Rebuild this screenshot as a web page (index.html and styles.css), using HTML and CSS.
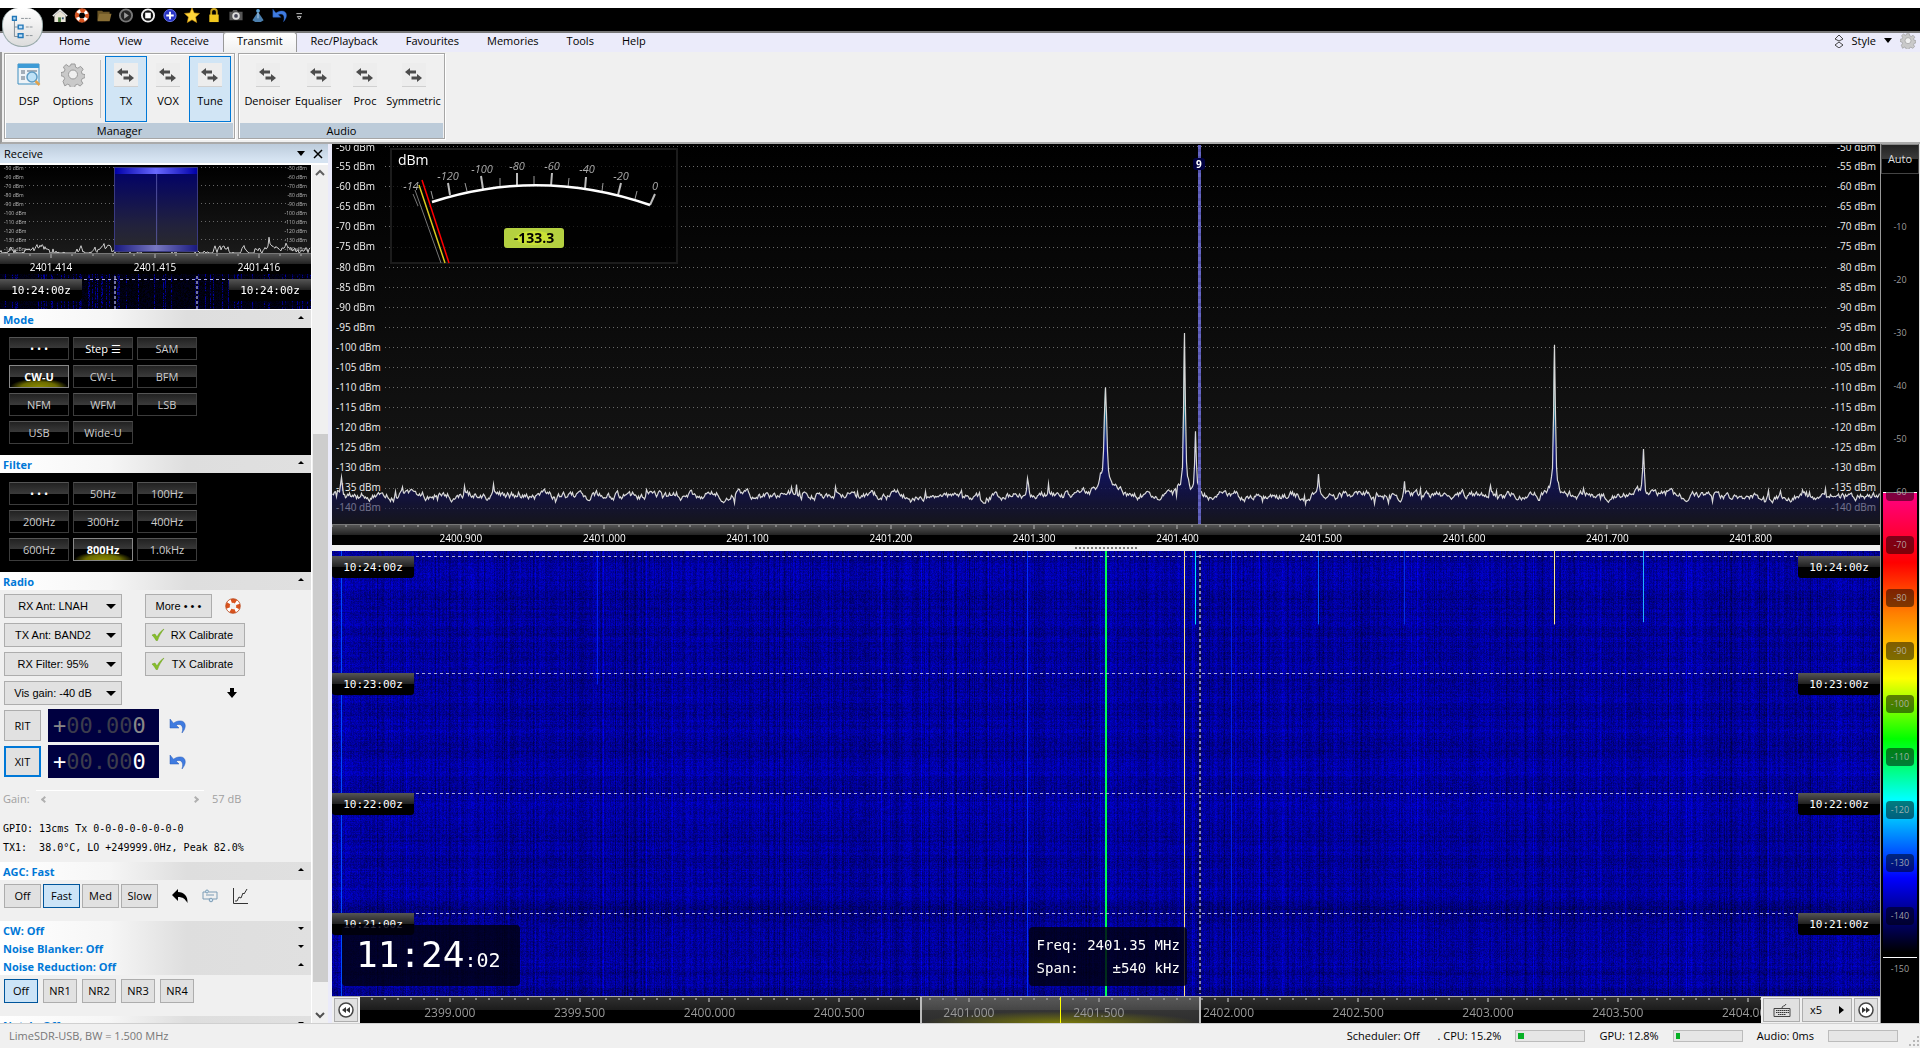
FILE: index.html
```html
<!DOCTYPE html>
<html lang="en">
<head>
<meta charset="utf-8">
<title>SDR Console</title>
<link rel="stylesheet" href="styles.css">
</head>
<body>
<svg width="0" height="0" class="defs" aria-hidden="true">
  <defs>
    <symbol id="i-swap" viewBox="0 0 24 24"><rect width="24" height="24" fill="#ededed"/><path d="M0 23.500h24" stroke="#d0d0d0"/><path d="M3 9l5-4v2.500h6v3H8V13zM20 15l-5-4v2.500H9.500v3H15V19z" fill="#4c4c4c"/></symbol>
    <symbol id="i-gear" viewBox="0 0 24 24"><path d="M10 1h4l.6 3.200 2.200 1L19.600 3.400l2.600 2.800-1.800 2.600.8 2.200 2.800.6v3l-2.800 1-.9 2.200 1.600 2.600-2.800 2.600-2.700-1.700-2.200.9-.8 3h-4l-.7-3.100-2.200-.9-2.700 1.700L2 18.400l1.700-2.700-1-2.200L0 12.700V9.600l3-.7 1-2.100L2.400 4l2.800-2.500L7.800 3.400 9.600 2.600z" fill="#c9c9c9" stroke="#9a9a9a"/><circle cx="12" cy="11.500" r="4.500" fill="#f0f0f0" stroke="#9a9a9a"/></symbol>
    <symbol id="i-dsp" viewBox="0 0 24 24"><path d="M1 1h21v20H1z" fill="#eef3f7" stroke="#3f8fc0"/><path d="M1 1h21v4H1z" fill="#3d9bd6"/><path d="M4 8h4M4 10h4M4 14h4M4 16h4M10 8h10" stroke="#8b98a5" stroke-width="1.500"/><circle cx="15" cy="14" r="5" fill="#bfe2f7" stroke="#5e9cc4" stroke-width="1.500"/><path d="M18.500 18l4 4" stroke="#e3a24a" stroke-width="2.500"/></symbol>
    <symbol id="i-ring" viewBox="0 0 16 16"><circle cx="8" cy="8" r="5.200" fill="none" stroke="#fff" stroke-width="4"/><circle cx="8" cy="8" r="5.200" fill="none" stroke="#d9531e" stroke-width="4" stroke-dasharray="5 3.170" stroke-dashoffset="2.500"/><circle cx="8" cy="8" r="7.300" fill="none" stroke="#b8481c" stroke-width=".8"/></symbol>
    <symbol id="i-undo" viewBox="0 0 18 16"><path d="M1 1v9h9L7 7c5-2 8 1 6 8 6-7 3-13-3-12-2 .2-4 1-5.500 2.200z" fill="#3f7be0" stroke="#2a5cb8" stroke-width=".5"/></symbol>
    <symbol id="i-tick" viewBox="0 0 14 14"><path d="M1 7l3-1 2 3c2-4 4-6 7-8-3 4-5 7-6.500 11.500H5C4 10.500 3 9 1 7z" fill="#86bf2a" stroke="#6a9f1a" stroke-width=".5"/></symbol>
  </defs>
</svg>

<header class="shell-top">
  <div class="titlebar">
    <div class="quick">
      <svg viewBox="0 0 16 16"><path d="M2 8v7h12V8L8 3z" fill="#e9e4d8"/><path d="M0 8l8-7 8 7-1 1-7-6-7 6z" fill="#f5f5f5" stroke="#aaa" stroke-width=".4"/><path d="M6 10h3v5H6z" fill="#4a7a3a"/><path d="M10 10h2v2h-2z" fill="#357"/></svg>
      <svg><use href="#i-ring"/></svg>
      <svg viewBox="0 0 16 16"><path d="M1 3h5l1 1h7v9H1z" fill="#6b5526"/><path d="M3 6h13l-2 8H1z" fill="#8a6f35"/></svg>
      <svg viewBox="0 0 16 16"><circle cx="8" cy="8" r="6.500" fill="#222" stroke="#777" stroke-width="2"/><path d="M6 4.500l5 3.500-5 3.500z" fill="#999"/></svg>
      <svg viewBox="0 0 16 16"><circle cx="8" cy="8" r="6.500" fill="#111" stroke="#eee" stroke-width="2"/><path d="M5 5h6v6H5z" fill="#fff"/></svg>
      <svg viewBox="0 0 16 16"><circle cx="8" cy="8" r="6.500" fill="#2733c4" stroke="#6a78f0"/><path d="M8 4v8M4 8h8" stroke="#fff" stroke-width="2"/></svg>
      <svg viewBox="0 0 16 16"><path d="M8 0l2.300 5.200 5.700.6-4.200 3.900 1.200 5.800L8 12.600l-5 2.900 1.200-5.800L0 5.800l5.700-.6z" fill="#ffd63a" stroke="#d79a10" stroke-width=".6"/></svg>
      <svg viewBox="0 0 16 16"><path d="M5 8V4a3 3 0 0 1 6 0v4" fill="none" stroke="#c9a21a" stroke-width="2"/><path d="M3 7h10v8H3z" fill="#f2c81e"/></svg>
      <svg viewBox="0 0 16 16"><path d="M1 4h3l1-2h4l1 2h5v9H1z" fill="#555"/><circle cx="8" cy="8.500" r="4" fill="#ddd"/><circle cx="8" cy="8.500" r="2" fill="#445"/></svg>
      <svg viewBox="0 0 16 16"><circle cx="8" cy="3" r="2" fill="#5fa3d8"/><path d="M8 4l6 9-3 2H5l-3-2z" fill="#4b7fae"/><path d="M8 5v6" stroke="#bcd9f0"/></svg>
      <svg viewBox="0 0 18 16"><use href="#i-undo"/></svg>
      <svg viewBox="0 0 16 16"><path d="M2 6h6M3 9h4l-2 3z" stroke="#ccc" fill="none"/></svg>
    </div>
  </div>
  <button class="orb" aria-label="Application menu">
    <svg viewBox="0 0 42 38"><path d="M12 12v17h5M12 19h5" fill="none" stroke="#7a8a96"/><path d="M19 10h10M24 19h7M24 28h7" stroke="#8b9298" stroke-dasharray="3 1"/><path d="M10 8h4v4h-4zM16 17h5v4h-5zM16 26h5v4h-5z" fill="#bfe0f8" stroke="#2277b8" stroke-width="1.500"/></svg>
  </button>
  <nav class="tabs">
    <button>Home</button><button>View</button><button>Receive</button><button class="on">Transmit</button><button>Rec/Playback</button><button>Favourites</button><button>Memories</button><button>Tools</button><button>Help</button>
    <div class="style-menu">
      <svg width="10" height="14" viewBox="0 0 10 14"><path d="M1 5l4-4 4 4-4 2zM1 11l4-3 4 3-4 3z" fill="none" stroke="#444"/></svg>
      <button>Style <i class="down"></i></button>
      <svg width="16" height="16"><use href="#i-gear"/></svg>
    </div>
  </nav>
  <div class="ribbon">
    <section class="group">
      <div class="tools">
        <button class="w42"><svg><use href="#i-dsp"/></svg>DSP</button>
        <button class="w46"><svg><use href="#i-gear"/></svg>Options</button>
        <i class="rule"></i>
        <button class="w42 on"><svg><use href="#i-swap"/></svg>TX</button>
        <button class="w42"><svg><use href="#i-swap"/></svg>VOX</button>
        <button class="w42 on"><svg><use href="#i-swap"/></svg>Tune</button>
      </div>
      <h2>Manager</h2>
    </section>
    <section class="group">
      <div class="tools">
        <button class="w52"><svg><use href="#i-swap"/></svg>Denoiser</button>
        <button class="w52"><svg><use href="#i-swap"/></svg>Equaliser</button>
        <button class="w42"><svg><use href="#i-swap"/></svg>Proc</button>
        <button class="w54"><svg><use href="#i-swap"/></svg>Symmetric</button>
      </div>
      <h2>Audio</h2>
    </section>
  </div>
</header>

<main>
  <aside class="dock">
    <h1>Receive <span><i class="down"></i><svg width="10" height="10" viewBox="0 0 10 10"><path d="M1 1l8 8M9 1L1 9" stroke="#000" stroke-width="1.500"/></svg></span></h1>
    <div class="dock-body">
      <div class="panels">
        <div class="mini">
          <div class="mini-plot" id="mini-plot"><canvas></canvas><div class="passband"></div></div>
          <div class="axis mini-axis" id="mini-axis"><canvas></canvas></div>
          <div class="mini-fall"><canvas id="mini-fall"></canvas><i class="dash"></i><b class="stamp">10:24:00z</b><b class="stamp right">10:24:00z</b></div>
        </div>

        <h3>Mode<i class="up"></i></h3>
        <div class="keys">
          <button class="lit">• • •</button><button class="lit">Step ☰</button><button>SAM</button>
          <button class="on">CW-U</button><button>CW-L</button><button>BFM</button>
          <button>NFM</button><button>WFM</button><button>LSB</button>
          <button>USB</button><button>Wide-U</button>
        </div>
        <h3>Filter<i class="up"></i></h3>
        <div class="keys">
          <button class="lit">• • •</button><button>50Hz</button><button>100Hz</button>
          <button>200Hz</button><button>300Hz</button><button>400Hz</button>
          <button>600Hz</button><button class="on">800Hz</button><button>1.0kHz</button>
        </div>

        <h3>Radio<i class="up"></i></h3>
        <div class="radio">
          <div class="combo"><select aria-label="RX antenna"><option>RX Ant: LNAH</option></select></div>
          <div class="side"><button class="btn more">More • • •</button><svg width="16" height="16"><use href="#i-ring"/></svg></div>
          <div class="combo"><select aria-label="TX antenna"><option>TX Ant: BAND2</option></select></div>
          <div class="side"><button class="btn cal"><svg width="14" height="14"><use href="#i-tick"/></svg><span>RX Calibrate</span></button></div>
          <div class="combo"><select aria-label="RX filter"><option>RX Filter: 95%</option></select></div>
          <div class="side"><button class="btn cal"><svg width="14" height="14"><use href="#i-tick"/></svg><span>TX Calibrate</span></button></div>
          <div class="combo"><select aria-label="Visual gain"><option>Vis gain: -40 dB</option></select></div>
          <div class="side arrow"><svg width="10" height="10" viewBox="0 0 10 10"><path d="M3 0h4v4h3L5 10 0 4h3z"/></svg></div>
        </div>
        <div class="offset">
          <button class="btn">RIT</button><output class="dim"><b>+</b>00.00<b>0</b></output><svg width="18" height="16"><use href="#i-undo"/></svg>
        </div>
        <div class="offset">
          <button class="btn focus">XIT</button><output><b>+</b>00.00<b>0</b></output><svg width="18" height="16"><use href="#i-undo"/></svg>
        </div>
        <div class="gain">
          <label for="gain">Gain:</label>
          <span class="track"><i></i><input id="gain" type="range" disabled><i class="r"></i></span>
          <span>57 dB</span>
        </div>
        <pre class="info">GPIO: 13cms Tx 0-0-0-0-0-0-0-0
TX1:  38.0°C, LO +249999.0Hz, Peak 82.0%</pre>

        <h3>AGC: Fast<i class="up"></i></h3>
        <div class="row agc">
          <button class="btn">Off</button><button class="btn on">Fast</button><button class="btn">Med</button><button class="btn">Slow</button>
          <svg width="16" height="14" viewBox="0 0 16 14"><path d="M0 6l6-6v3c6 0 10 4 9.500 11C13 10 11 8 6 8v4z"/></svg>
          <svg width="16" height="14" viewBox="0 0 16 14"><path d="M1 3h3M7 3h8v7h-4M8 10H1V3M4 6h8" fill="none" stroke="#7c9cb5"/><circle cx="5" cy="2.500" r="1.500" fill="#cfe3f2" stroke="#7c9cb5"/><circle cx="9" cy="11" r="1.800" fill="#cfe3f2" stroke="#7c9cb5"/></svg>
          <svg width="16" height="16" viewBox="0 0 16 16"><path d="M1.500 0v15.500H16M3 13h2l2-4 2 1 2-5 1 1 3-5" fill="none" stroke="#333"/></svg>
        </div>
        <h3>CW: Off<i class="dn"></i></h3>
        <h3>Noise Blanker: Off<i class="dn"></i></h3>
        <h3>Noise Reduction: Off<i class="up"></i></h3>
        <div class="row nr">
          <button class="btn on">Off</button><button class="btn">NR1</button><button class="btn">NR2</button><button class="btn">NR3</button><button class="btn">NR4</button>
        </div>
        <h3>Notch: Off<i class="dn"></i></h3>
      </div>
      <div class="scroll">
        <svg width="10" height="8" viewBox="0 0 10 8"><path d="M1 6l4-4 4 4" fill="none" stroke="#606060" stroke-width="2"/></svg>
        <i></i>
        <svg width="10" height="8" viewBox="0 0 10 8"><path d="M1 2l4 4 4-4" fill="none" stroke="#505050" stroke-width="2"/></svg>
      </div>
    </div>
  </aside>

  <section class="display">
    <div class="plot" id="plot">
      <canvas></canvas>
      <i class="marker"></i><b class="marker-no">9</b>
      <svg class="meter" viewBox="0 0 288 116">
        <rect x="1" y="1" width="286" height="114" fill="#000" fill-opacity=".7" stroke="#1c1c1c" stroke-width="2"/>
        <text x="8" y="17" class="unit">dBm</text>
        <g class="nums">
          <text x="21" y="42">-14</text><text x="58" y="32">-120</text><text x="92" y="25">-100</text><text x="127" y="22">-80</text><text x="162" y="22">-60</text><text x="197" y="25">-40</text><text x="231" y="32">-20</text><text x="265" y="42">0</text>
        </g>
        <path d="M60 47l-2-12M93 41l-2-13M127 38V25M161 38l1-13M195 41l1-12M228 47l3-12M260 57l5-11" stroke="#bbb" stroke-width="2"/>
        <path d="M43 51l-2-8M77 43l-2-8M110 39v-9M144 37v-9M178 39l1-9M212 43l1-8M245 51l2-8" stroke="#999"/>
        <path d="M42 54Q150 19 260 57" fill="none" stroke="#fff" stroke-width="2.500"/>
        <path d="M25 42l26 73M23 46l5 12" stroke="#777"/>
        <path d="M29 37l26 78" stroke="#d8c820" stroke-width="1.500"/>
        <path d="M32 32l27 83" stroke="#f00" stroke-width="1.500"/>
        <rect x="114" y="80" width="60" height="20" rx="3" fill="#b4d040"/><ellipse cx="144" cy="90" rx="18" ry="7" fill="#d3ea30" opacity=".7"/>
        <text x="144" y="95" class="val">-133.3</text>
      </svg>
    </div>
    <div class="axis" id="axis"><canvas></canvas></div>
    <div class="splitter"><i></i></div>
    <div class="fall" id="fall">
      <canvas></canvas>
      <i class="cursor"></i>
      <div class="clock">11:24<small>:02</small></div>
      <pre class="span">Freq: 2401.35 MHz
Span:    ±540 kHz</pre>
    </div>
    <div class="bandbar">
      <button class="btn" aria-label="Back"><svg width="16" height="16" viewBox="0 0 16 16"><circle cx="8" cy="8" r="7" fill="#fff" stroke="#444" stroke-width="1.500"/><path d="M8 5v6L4 8zM12 5v6L8 8z" fill="#333"/></svg></button>
      <div class="band" id="band"><canvas></canvas><i class="window"></i></div>
      <button class="btn kb" aria-label="Keyboard"><svg width="18" height="14" viewBox="0 0 18 14"><path d="M1 5.500h16v8H1z" fill="#ddd" stroke="#444"/><path d="M3 7.500h13M3 9.500h13M5 11.500h8" stroke="#333" stroke-dasharray="1.500 .5"/><path d="M9 5c0-3 3-1 4-4" fill="none" stroke="#444"/></svg></button>
      <button class="btn x5">x5 <i></i></button>
      <button class="btn" aria-label="Forward"><svg width="16" height="16" viewBox="0 0 16 16"><circle cx="8" cy="8" r="7" fill="#fff" stroke="#444" stroke-width="1.500"/><path d="M8 5v6l4-3zM4 5v6l4-3z" fill="#333"/></svg></button>
    </div>
  </section>

  <aside class="levels">
    <button>Auto</button>
    <div class="scale" id="scale"><i class="spectrum"></i></div>
  </aside>
</main>

<footer>
  <span class="dev">LimeSDR-USB, BW = 1.500 MHz</span>
  <span class="sched">Scheduler: Off</span>
  <label for="cpu" class="cpu">. CPU: 15.2%</label><progress id="cpu" max="100" value="8"></progress>
  <label for="gpu">GPU: 12.8%</label><progress id="gpu" max="100" value="6"></progress>
  <label for="aud">Audio: 0ms</label><progress id="aud" max="100" value="0"></progress>
  <svg class="grip" width="10" height="10" viewBox="0 0 10 10"><path d="M8 0h2v2H8zM4 4h2v2H4zM8 4h2v2H8zM0 8h2v2H0zM4 8h2v2H4zM8 8h2v2H8z" fill="#b8b8b8"/></svg>
</footer>
<script src="app.js"></script>
</body>
</html>
```

FILE: styles.css
```css
* { box-sizing: border-box; }
:root { --ui: "Segoe UI", "Open Sans", "Noto Sans", sans-serif; --mono: Consolas, "DejaVu Sans Mono", monospace; }
body { margin: 0; height: 100vh; overflow: hidden; display: flex; flex-direction: column; background: #f0f0f0; font: 11px/16px var(--ui); color: #000; }
button, select, input { font: inherit; color: inherit; margin: 0; }
h1, h2, h3, pre { margin: 0; font-weight: 400; font-size: inherit; }
canvas { display: block; position: absolute; inset: 0; width: 100%; height: 100%; }
.defs { position: absolute; }
.down { display: inline-block; border: 4px solid transparent; border-top: 5px solid #000; border-bottom: 0; }

/* ribbon */
.shell-top { position: relative; background: #fff; padding-top: 8px; }
.titlebar { height: 23px; background: #000; }
.quick { display: flex; gap: 6px; padding-left: 52px; }
.quick svg { width: 16px; height: 15px; }
.orb { position: absolute; left: 2px; top: 8px; width: 41px; height: 39px; padding: 0; border: 1px solid #9aa; border-top: 0; border-radius: 16px 16px 20px 20px; background: linear-gradient(#fff, #dcdcdc); }
.orb svg { width: 40px; height: 38px; display: block; }
.tabs { display: flex; align-items: stretch; height: 21px; padding-left: 45px; background: #ebebfa; border-top: 2px solid #777; }
.tabs > button { padding: 0 14px; border: 0; background: none; line-height: 14px; padding-bottom: 4px; }
.tabs > .on { background: linear-gradient(#fff, #f0f0f0); border: 1px solid #999; border-bottom: 0; border-radius: 3px 3px 0 0; margin-top: -1px; padding: 0 13px 4px; }
.style-menu { margin-left: auto; display: flex; align-items: center; gap: 8px; padding: 0 4px 4px 0; }
.style-menu button { border: 0; background: none; padding: 0; display: flex; align-items: center; gap: 8px; }
.ribbon { display: flex; gap: 3px; padding: 1px 4px 0 2px; height: 92px; border-bottom: 2px solid #aaa; border-left: 2px solid #999; background: #f0f0f0; }
.group { height: 86px; border: 1px solid #a6a6a6; box-shadow: inset 1px 1px #fff, 1px 1px #fff; display: flex; flex-direction: column; }
.tools { flex: 1; display: flex; padding: 2px 3px 1px; }
.tools button { display: flex; flex-direction: column; align-items: center; gap: 6px; padding: 6px 0 0; border: 1px solid transparent; background: none; }
.tools button svg { width: 24px; height: 24px; }
.tools .on { background: #d1e5f5; border-color: #0078d7; }
.tools .rule { width: 1px; background: #c0c0c0; margin: 4px 4px; }
.w42 { width: 42px; } .w46 { width: 46px; } .w52 { width: 51px; } .w54 { width: 55px; }
.group h2 { background: #bccbd9; text-align: center; line-height: 15px; margin: 0 1px; }

main { flex: 1; min-height: 0; display: flex; background: #ebebfa; }

/* receive dock */
.dock { width: 328px; margin-right: 4px; display: flex; flex-direction: column; background: #f0f0f0; flex: none; }
.dock h1 { height: 21px; line-height: 20px; padding: 0 5px 0 4px; display: flex; justify-content: space-between; background: linear-gradient(#bccbdb, #d5e3f1 80%); border-bottom: 2px solid #fff; }
.dock h1 span { display: flex; align-items: center; gap: 8px; }
.dock-body { flex: 1; min-height: 0; display: flex; }
.panels { width: 311px; overflow: hidden; }
.mini { background: #000; color: #fff; }
.mini-plot { position: relative; height: 88px; background: linear-gradient(#000, #1a1a1a); }
.mini-plot .db { font-size: 5px; line-height: 6px; left: 4px; color: #bbb; }
.mini-plot .db.right { left: auto; right: 4px; }
.passband { position: absolute; left: 114px; width: 84px; top: 2px; bottom: 1px; background: linear-gradient(90deg, transparent 50%, #6060b0 50%, transparent 52%), linear-gradient(#00006a, #22223c 70%, #2a2a2a); border: 1px solid #3a3a80; }
.passband::before, .passband::after { content: ""; position: absolute; left: 0; right: 0; height: 6px; background: linear-gradient(90deg, #0000a8, #6868ff 50%, #0000a8); top: 0; }
.passband::after { top: auto; bottom: 0; background: linear-gradient(90deg, #1a1a80, #7878c0 50%, #1a1a80); }
.mini-fall { position: relative; height: 36px; border-bottom: 1px solid #fff; }
.dash { position: absolute; left: 0; right: 0; top: 5px; height: 1px; background: repeating-linear-gradient(90deg, #a8a8d8 0 3px, transparent 3px 6px); }
.stamp { position: absolute; left: 0; top: 5px; width: 82px; height: 22px; text-align: center; font: 400 11px/23px var(--mono); color: #fff; background: linear-gradient(#555, #222 48%, #000 50%); border-radius: 0 0 3px 3px; }
.stamp.right { left: auto; right: 0; }

.panels h3 { height: 18px; line-height: 20px; padding: 0 6px 0 3px; font-weight: 700; color: #0078d7; background: linear-gradient(90deg, #fff, #f6f6f6 35%, #dedede 60%, #e0e0e0); display: flex; justify-content: space-between; }
.up, .dn { margin: 6px 1px 0; height: 0; border: 3px solid transparent; border-bottom-color: #000; border-top: 0; }
.dn { border: 3px solid transparent; border-top-color: #000; border-bottom: 0; }
.keys { background: #000; display: grid; grid-template-columns: repeat(3, 60px); gap: 5px 4px; padding: 9px 9px 11px; }
.keys button { height: 23px; padding: 0; border: 1px solid #3c3c3c; border-top-color: #555; color: #ccc; background: linear-gradient(#222, #3a3a3a 50%, #000 50%); line-height: 19px; }
.keys .lit { color: #fff; }
.keys .on { color: #fff; font-weight: 700; border-color: #888; background: radial-gradient(ellipse 50% 40% at 50% 100%, #8a8a00, #6a6a00 60%, transparent), linear-gradient(#222, #3a3a3a 50%, #000 50%); }

.btn { height: 24px; padding: 0; border: 1px solid #adadad; background: #e1e1e1; text-align: center; }
.btn.on { background: #cce4f7; border-color: #00559b; }
.btn.focus { border: 2px solid #0078d7; }
.radio { display: grid; grid-template-columns: 118px 1fr; gap: 5px 23px; padding: 4px 4px 4px; font-family: "Liberation Sans", Arial, sans-serif; }
.combo { position: relative; height: 24px; }
.combo select { appearance: none; width: 100%; height: 24px; padding: 0 20px 0 0; border: 1px solid #adadad; border-radius: 0; background: #e1e1e1; text-align: center; text-align-last: center; }
.combo::after { content: ""; position: absolute; right: 6px; top: 10px; border: 5px solid transparent; border-top-color: #000; border-bottom: 0; pointer-events: none; }
.side { display: flex; align-items: center; gap: 13px; }
.more { width: 67px; }
.cal { width: 100px; display: flex; align-items: center; padding: 0 11px 0 5px; justify-content: space-between; }
.arrow { padding-left: 82px; }
.offset { display: flex; align-items: center; gap: 7px; padding-left: 4px; height: 33px; margin-bottom: 3px; }
.offset .btn { width: 37px; height: 31px; }
.offset output { width: 111px; height: 33px; padding-left: 5px; background: #000040; font: 22px/34px var(--mono); color: #3c3c4c; }
.offset output b { font-weight: 400; color: #fff; }
.offset .dim b { color: #888; }
.offset svg { margin-left: 3px; }
.gain { display: flex; align-items: center; height: 18px; padding-left: 3px; margin-top: 12px; color: #a0a0a0; }
.gain label { width: 33px; }
.track { width: 168px; margin-right: 8px; padding: 0 6px; display: flex; justify-content: space-between; align-items: center; border-top: 1px solid #fff; height: 18px; }
.track i { width: 5px; height: 5px; border: solid #b0b0b0; border-width: 0 0 2px 2px; transform: rotate(45deg); }
.track i.r { transform: rotate(225deg); }
.track input { appearance: none; flex: 1; height: 4px; background: none; }
.track input::-webkit-slider-thumb { appearance: none; width: 0; }
.info { font: 10px/19px var(--mono); padding: 11px 3px 5px; }
.row { display: flex; align-items: center; padding: 4px 4px 13px; }
.agc { gap: 2px; } .agc .btn { width: 37px; }
.agc svg { margin-left: 12px; } 
.nr { gap: 5px; } .nr .btn { width: 34px; }
.scroll { width: 17px; border-left: 1px solid #fff; display: flex; flex-direction: column; align-items: center; padding: 4px 0; }
.scroll i { flex: 1; width: 15px; margin: 257px 0 29px; background: #cdcdcd; }

/* spectrum and waterfall */
.display { flex: 1; min-width: 0; display: flex; flex-direction: column; background: #f0f0f0; }
.plot { position: relative; flex: 379 1 0; overflow: hidden; background: linear-gradient(#000, #181818); border-top: 1px solid #000; }
.db { position: absolute; left: 4px; font-size: 10px; line-height: 14px; color: #eee; transform: translateY(-50%); white-space: nowrap; }
.db.right { left: auto; right: 4px; }
.marker { position: absolute; left: 56%; top: 0; bottom: 0; width: 3px; margin-left: -1px; background: repeating-linear-gradient(#6464c0 0 4px, #5656ac 4px 7px); }
.marker-no { position: absolute; left: 56%; top: 13px; margin-left: -6px; width: 12px; text-align: center; font-size: 10px; line-height: 12px; color: #fff; background: #000040; border-radius: 3px; }
.meter { position: absolute; left: 58px; top: 3px; width: 288px; height: 116px; }
.meter .unit { fill: #fff; font-size: 14px; }
.meter .nums { fill: #aaa; font-size: 11px; font-style: italic; text-anchor: middle; }
.meter .val { font-size: 14px; font-weight: 700; text-anchor: middle; }
.axis { position: relative; flex: none; height: 21px; background: linear-gradient(#777 1px, #555 1px, #222 11px, #000 11px); color: #fff; }
.axis span, .band span { position: absolute; top: 8px; font-size: 10px; line-height: 12px; transform: translateX(-50%); }
.splitter { height: 6px; flex: none; display: flex; justify-content: center; align-items: center; }
.splitter i { width: 62px; height: 2px; background: repeating-linear-gradient(90deg, #777 0 2px, transparent 2px 4px); }
.fall { position: relative; flex: 446 1 0; overflow: hidden; background: #0000a0; }
.cursor { position: absolute; left: 56%; top: 4px; bottom: 2px; width: 2px; background: repeating-linear-gradient(#8888b8 0 3px, #101040 3px 6px); }
.fall .dash, .fall .stamp { top: var(--y); }
.clock { position: absolute; left: 10px; bottom: 10px; height: 61px; width: 178px; padding-left: 14px; border-radius: 4px; background: rgba(0, 0, 16, .82); color: #fff; font: 36px/60px var(--mono); }
.clock small { font-size: 20px; }
.span { position: absolute; left: 45%; bottom: 10px; padding: 7px 7px 6px 8px; border-radius: 4px; background: rgba(0, 0, 16, .82); color: #fff; font: 14px/23px var(--mono); }
.bandbar { flex: none; height: 27px; display: flex; border-top: 1px solid #aaa; gap: 2px; align-items: center; padding: 0 2px; }
.bandbar .btn { width: 24px; display: flex; align-items: center; justify-content: center; flex: none; }
.bandbar .kb { width: 37px; }
.bandbar .x5 { width: 50px; gap: 17px; }
.x5 i { border: 4px solid transparent; border-left: 5px solid #000; border-right: 0; }
.band { position: relative; flex: 1; height: 26px; overflow: hidden; background: linear-gradient(#303030, #1c1c1c 13px, #000 13px); color: #999; }
.band span { font-size: 12px; line-height: 16px; }
.window { position: absolute; left: 40%; width: 20%; top: 0; bottom: 0; border: 2px solid #bbb; border-width: 0 2px; background: radial-gradient(ellipse 50% 45% at 50% 100%, rgba(140, 140, 0, .8), transparent), linear-gradient(rgba(150, 150, 150, .4), rgba(130, 130, 130, .35)); }
.window::after { content: ""; position: absolute; left: 50%; top: 0; bottom: 0; width: 1px; background: #ff0; }

/* colour scale */
.levels { width: 40px; flex: none; display: flex; flex-direction: column; background: #000; border-left: 1px solid #999; border-right: 1px solid #ddd; }
.levels button { height: 30px; flex: none; padding: 0; border: 1px solid #444; border-top-color: #888; color: #ddd; background: linear-gradient(#222, #3c3c3c 50%, #000 50%); }
.scale { position: relative; flex: 1; margin: 0 2px; overflow: hidden; }
.scale span { position: absolute; left: 3px; right: 3px; height: 18px; border-radius: 4px; text-align: center; font-size: 9px; line-height: 18px; color: rgba(190, 190, 190, .85); background: rgba(0, 0, 0, .5); transform: translateY(-50%); }
.spectrum { position: absolute; left: 0; right: 0; top: 37.4%; height: 55%; border: solid #fff; border-width: 1px 0; background: linear-gradient(#ff0084, #f00 15%, #ff8000 26%, #ff0 40%, #0f0 53%, #0ff 66%, #00f 83%, #000 99%); }

footer { flex: none; height: 25px; display: flex; align-items: center; padding: 0 1px 1px 9px; border-top: 1px solid #d0d0d0; }
.dev { color: #777; margin-right: auto; }
.sched { margin-right: 18px; }
footer label { margin-right: 14px; }
footer progress { margin-right: 14px; }
progress { appearance: none; width: 70px; height: 12px; border: 1px solid #bcbcbc; background: #e6e6e6; padding: 2px; }
progress::-webkit-progress-bar { background: none; }
progress::-webkit-progress-value { background: #06b025; }
.grip { align-self: flex-end; margin: 0 0 1px -3px; }
```

FILE: app.js
```js
let seed = 7;
function rnd() { seed = (seed * 1664525 + 1013904223) >>> 0; return seed / 4294967296; }

function surface(canvas) {
  const w = canvas.width = canvas.clientWidth;
  const h = canvas.height = canvas.clientHeight;
  return { c: canvas.getContext('2d'), w, h };
}
function add(parent, tag, text, cls, css) {
  const e = document.createElement(tag);
  e.textContent = text; e.className = cls || ''; e.style.cssText = css;
  parent.insertBefore(e, tag === 'span' && parent.classList.contains('plot') ? parent.firstChild : null);
  return e;
}
function noise(w, base, amp) {
  const y = []; let v = 0;
  for (let x = 0; x < w; x++) {
    v = v * 0.75 + (rnd() - 0.5) * amp;
    y.push(base + v + (rnd() > 0.96 ? (rnd() - 0.5) * amp * 2.5 : 0));
  }
  return y;
}

// spectrum: x positions are fractions of the span, levels are dBm
const peaks = [[0.0058, -132, 2], [0.085, -134.5, 1], [0.449, -132.8, 2], [0.4625, -134, 1], [0.4993, -111, 5],
  [0.5504, -96.5, 2], [0.5575, -122, 1.5], [0.637, -131, 1.5], [0.6925, -132.8, 1.5], [0.748, -134.5, 2],
  [0.7894, -99.5, 2], [0.847, -125.5, 2]];
(function plot() {
  const box = document.getElementById('plot');
  const { c, w, h } = surface(box.querySelector('canvas'));
  const yOf = db => h * (0.003 + (-50 - db) * 0.0106);
  for (let db = -50; db >= -140; db -= 5) {
    const y = yOf(db);
    c.fillStyle = '#6a6a6a';
    for (let x = 53; x < w - 53; x += 4) c.fillRect(x, Math.round(y), 1, 1);
    const top = 'top:' + (Math.max(y, 2) / h * 100).toFixed(2) + '%';
    add(box, 'span', db + ' dBm', 'db', top);
    add(box, 'span', db + ' dBm', 'db right', top);
  }
  const t = noise(w, yOf(-137), 6);
  for (const [f, db, width] of peaks) {
    const px = Math.round(f * w), tall = yOf(-137) - yOf(db);
    for (let x = Math.max(0, px - 40); x < Math.min(w, px + 40); x++) {
      const d = Math.abs(x - px);
      t[x] -= tall * (0.68 * Math.exp(-d * d / (width * 0.6)) + 0.32 * Math.exp(-d / (width * 1.4)));
    }
  }
  const g = c.createLinearGradient(0, yOf(-96), 0, h);
  g.addColorStop(0, 'rgba(220,220,220,.9)'); g.addColorStop(0.4, 'rgba(40,150,160,.9)');
  g.addColorStop(0.6, 'rgba(16,24,150,.85)'); g.addColorStop(0.85, 'rgba(16,16,90,.6)'); g.addColorStop(1, 'rgba(20,20,34,.5)');
  c.beginPath(); c.moveTo(0, h);
  t.forEach((y, x) => c.lineTo(x, y));
  c.lineTo(w, h); c.fillStyle = g; c.fill();
  c.beginPath(); t.forEach((y, x) => c.lineTo(x + 0.5, y));
  c.strokeStyle = '#d8d8d8'; c.lineWidth = 1.2; c.stroke();
})();

function axis(id, first, step, start, pitch, count, minor) {
  const box = document.getElementById(id);
  const { c, w } = surface(box.querySelector('canvas'));
  c.fillStyle = '#808080';
  for (let k = -minor; k < count * minor + minor; k++) {
    const x = (start + k * pitch / minor) * w, big = k % minor === 0;
    c.fillRect(Math.round(x) - 1, 1, 2, big ? 4 : 2);
  }
  for (let i = 0; i < count; i++)
    add(box, 'span', (first + i * step).toFixed(3), '', 'left:' + ((start + i * pitch) * 100).toFixed(2) + '%');
}
axis('axis', 2400.9, 0.1, 0.0833, 0.09257, 9 + 1, 10);
axis('band', 2399, 0.5, 0.0641, 0.09263, 11, 10);
axis('mini-axis', 2401.414, 0.001, 0.164, 0.3344, 3, 5);

// waterfall texture
function texture(canvas, level) {
  const { c, w, h } = surface(canvas), img = c.createImageData(w, h);
  const col = [], row = [];
  for (let x = 0; x < w; x++) col.push((rnd() - 0.5) * 46 - (rnd() > 0.9 ? 34 : 0) + (rnd() > 0.97 ? 40 : 0));
  for (let y = 0, v = 0; y < h; y++) { v = v * 0.8 + (rnd() - 0.5) * 18; row.push(v + (rnd() - 0.5) * 22); }
  for (let y = 0; y < h; y++) for (let x = 0; x < w; x++) {
    const i = (y * w + x) * 4;
    img.data[i + 2] = level + col[x] + row[y] + (rnd() - 0.5) * 60;
    img.data[i + 3] = 255;
  }
  c.putImageData(img, 0, 0);
  return { c, w, h };
}
(function fall() {
  const box = document.getElementById('fall');
  const { c, w, h } = texture(box.querySelector('canvas'), 154);
  const lines = [[0.0058, '#0050ff', 1, 1], [0.1715, '#0020f0', 1, 0.3], [0.449, '#0030ff', 1, 1], [0.4993, '#00ff50', 2, 1], [0.5504, '#ffe080', 1, 1],
    [0.5575, '#00e0f0', 1, 0.165], [0.581, '#0020f0', 1, 1], [0.637, '#0060ff', 1, 0.165], [0.6925, '#0030e8', 1, 0.165],
    [0.7894, '#ffe890', 1, 0.165], [0.847, '#20b0ff', 1, 0.16]];
  for (const [f, color, lw, len] of lines) { c.fillStyle = color; c.fillRect(Math.round(f * w), 0, lw, h * len); }
  ['10:24:00z', '10:23:00z', '10:22:00z', '10:21:00z'].forEach((t, i) => {
    const y = '--y:' + ([0.0112, 0.2758, 0.5449, 0.8139][i] * 100).toFixed(2) + '%';
    for (const [tag, s, cls] of [['i', '', 'dash'], ['b', t, 'stamp'], ['b', t, 'stamp right']]) {
      const e = add(box, tag, s, cls, y);
      box.insertBefore(e, box.querySelector('.clock'));
    }
  });
})();

(function mini() {
  const m = surface(document.querySelector('#mini-plot canvas')), box = document.getElementById('mini-plot');
  for (let i = 0; i < 10; i++) {
    const y = 2 + i * 9;
    m.c.fillStyle = '#666';
    if (i % 2 === 0) for (let x = 25; x < m.w - 24; x += 4) m.c.fillRect(x, y, 1, 1);
    for (const side of ['db', 'db right']) add(box, 'b', (-50 - i * 10) + ' dBm', side, 'font-weight:400;top:' + (y + 1) + 'px');
  }
  const t = noise(m.w, 86, 7);
  m.c.beginPath(); t.forEach((y, x) => m.c.lineTo(x, Math.min(88, y)));
  m.c.strokeStyle = '#ccc'; m.c.stroke();
  const f = surface(document.getElementById('mini-fall'));
  for (let x = 0; x < f.w; x++) {
    const s = rnd() > 0.8 ? 110 : 20;
    for (let y = 0; y < f.h; y++) { f.c.fillStyle = 'rgb(0,0,' + Math.round(rnd() * s * 1.6) + ')'; f.c.fillRect(x, y, 1, 1); }
  }
  f.c.fillStyle = '#7070a0';
  for (let y = 2; y < f.h; y += 5) { f.c.fillRect(114, y, 2, 3); f.c.fillRect(196, y, 2, 3); }
})();

for (let i = 1; i <= 15; i++)
  add(document.getElementById('scale'), 'span', String(-10 * i), '', 'top:' + ((53 + (i - 1) * 53) / 849 * 100).toFixed(2) + '%');
```
